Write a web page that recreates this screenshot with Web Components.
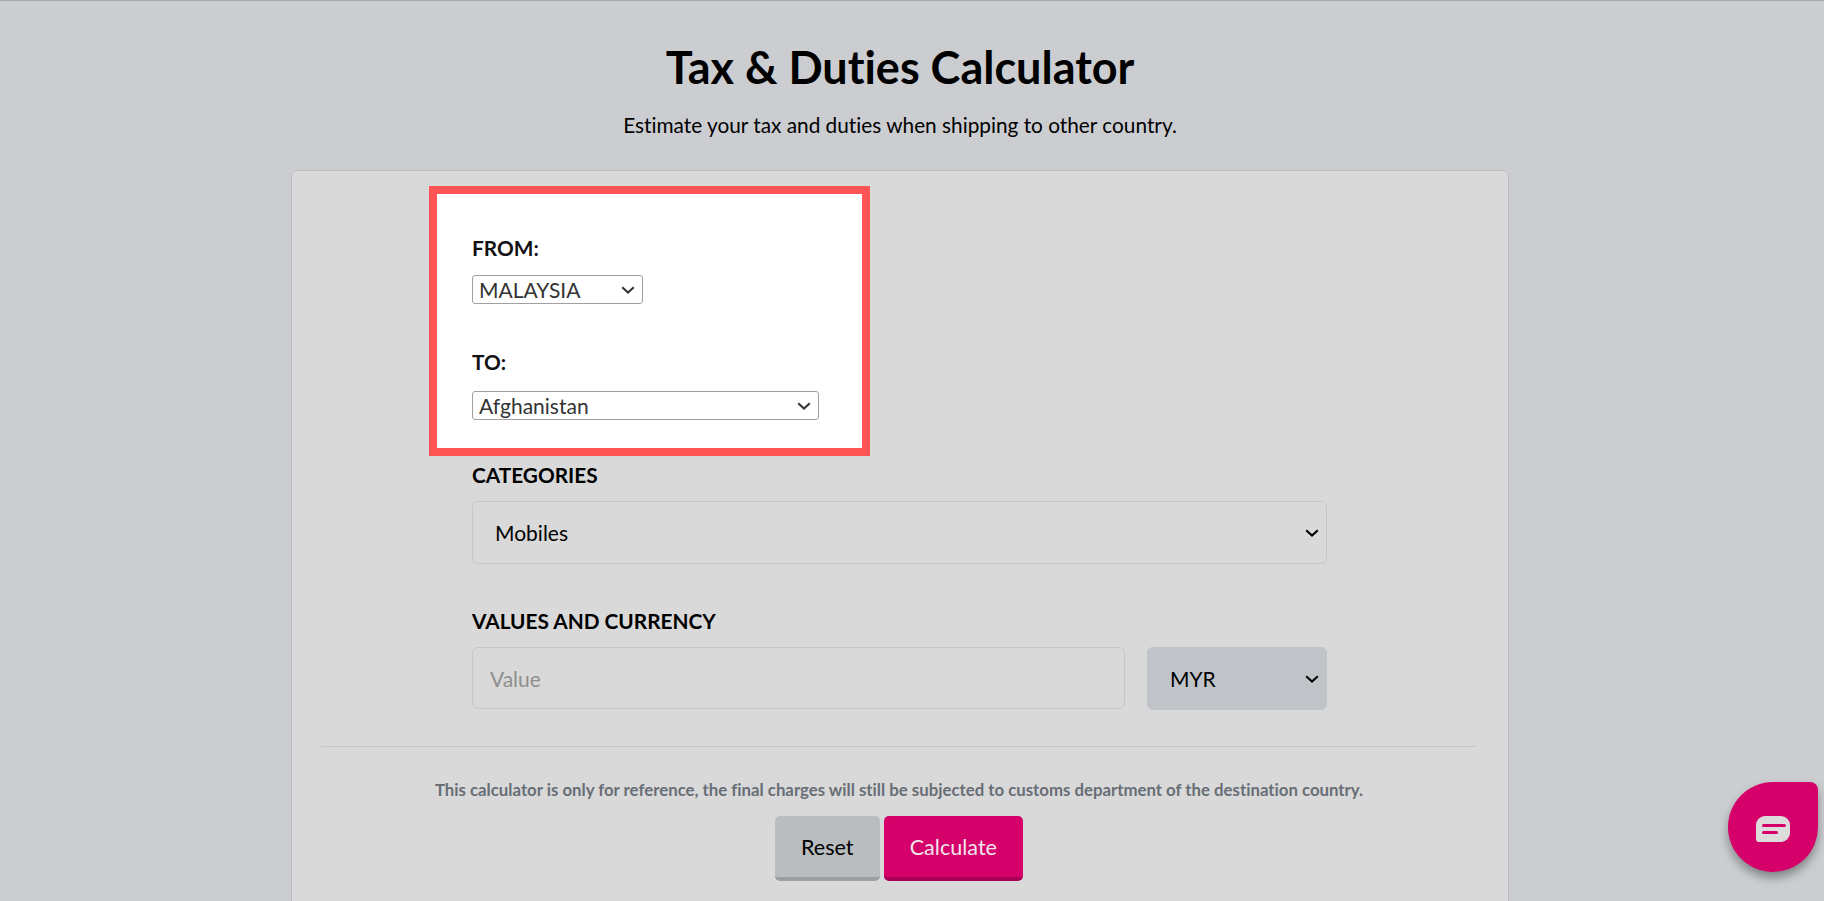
<!DOCTYPE html>
<html lang="en">
<head>
<meta charset="utf-8">
<title>Tax &amp; Duties Calculator</title>
<style>
    html, body { height: 100%; overflow: hidden; }
    body {
        margin: 0;
        background: #cbcdd1;
        border-top: 1px solid #a6a8aa;
        box-sizing: border-box;
        font-family: Lato, "Liberation Sans", sans-serif;
        font-variant-ligatures: none;
        color: #000;
    }
</style>
</head>
<body>
<calc-page>
    <page-header slot="header" heading="Tax &amp; Duties Calculator">
        Estimate your tax and duties when shipping to other country.
    </page-header>
    <calc-card>
        <route-box>
            <small-select label="FROM:" value="MALAYSIA" width="171px" gap="14px"></small-select>
            <small-select label="TO:" value="Afghanistan" width="347px" gap="16px"></small-select>
        </route-box>
        <form-group label="CATEGORIES">
            <big-select value="Mobiles"></big-select>
        </form-group>
        <form-group label="VALUES AND CURRENCY">
            <value-row></value-row>
        </form-group>
        <calc-footer slot="footer">
            This calculator is only for reference, the final charges will still be subjected to customs department of the destination country.
        </calc-footer>
    </calc-card>
</calc-page>
<chat-launcher></chat-launcher>

<script>
// Shared chevron for all the selects, only the colour changes
function chevron(color) {
    const svg = `<svg xmlns="http://www.w3.org/2000/svg" width="14" height="8" viewBox="0 0 14 8"><path d="M1.2 1.2L7 6.6L12.8 1.2" fill="none" stroke="${color}" stroke-width="2"/></svg>`;
    return `url("data:image/svg+xml,${encodeURIComponent(svg)}")`;
}

// Page shell, centres the header and the card
class CalcPage extends HTMLElement {
    connectedCallback() {
        this.attachShadow({ mode: 'open' });
        this.shadowRoot.innerHTML = `
            <style>
                :host { display: block; padding-right: 24px; }
                .wrap {
                    display: flex;
                    flex-direction: column;
                    align-items: center;
                }
            </style>
            <div class="wrap">
                <slot name="header"></slot>
                <slot></slot>
            </div>
        `;
    }
}

class PageHeader extends HTMLElement {
    connectedCallback() {
        this.attachShadow({ mode: 'open' });
        this.shadowRoot.innerHTML = `
            <style>
                :host {
                    display: block;
                    text-align: center;
                    padding-top: 39px;
                    margin-bottom: 30px;
                }
                h1 {
                    margin: 0 0 16px;
                    font-size: 45px;
                    line-height: 54px;
                    font-weight: 700;
                }
                p {
                    margin: 0;
                    font-size: 20.8px;
                    line-height: 30px;
                }
            </style>
            <h1>${this.getAttribute('heading')}</h1>
            <p><slot></slot></p>
        `;
    }
}

class CalcCard extends HTMLElement {
    connectedCallback() {
        this.attachShadow({ mode: 'open' });
        this.shadowRoot.innerHTML = `
            <style>
                :host {
                    display: block;
                    box-sizing: border-box;
                    width: 1218px;
                    height: 900px;
                    background: #d9d9d9;
                    border: 1px solid #bdbfc3;
                    border-radius: 6px;
                    padding: 15px 31px 0 29px;
                }
                .form {
                    display: flex;
                    flex-direction: column;
                    width: 855px;
                    margin: 0 auto 0 151px;
                }
            </style>
            <div class="form"><slot></slot></div>
            <slot name="footer"></slot>
        `;
    }
}

// The red marked part of the form
class RouteBox extends HTMLElement {
    connectedCallback() {
        this.attachShadow({ mode: 'open' });
        this.shadowRoot.innerHTML = `
            <style>
                :host {
                    display: flex;
                    flex-direction: column;
                    gap: 45px;
                    box-sizing: border-box;
                    width: 441px;
                    height: 270px;
                    margin-left: -43px;
                    padding: 41px 35px 0;
                    background: #fff;
                    border: 8px solid #ff5555;
                }
            </style>
            <slot></slot>
        `;
    }
}

class SmallSelect extends HTMLElement {
    connectedCallback() {
        this.attachShadow({ mode: 'open' });
        this.shadowRoot.innerHTML = `
            <style>
                :host { display: block; }
                label {
                    display: block;
                    font-size: 20.8px;
                    line-height: 26px;
                    font-weight: 700;
                    color: #111;
                    margin-bottom: ${this.getAttribute('gap')};
                }
                select {
                    display: block;
                    box-sizing: border-box;
                    appearance: none;
                    width: ${this.getAttribute('width')};
                    height: 29px;
                    padding: 0 6px;
                    background: #fff ${chevron('#333')} no-repeat right 7px center;
                    border: 1px solid #a0a0a0;
                    border-radius: 3px;
                    font-family: Lato, sans-serif;
                    font-variant-ligatures: none;
                    font-size: 21px;
                    color: #333;
                }
            </style>
            <label>${this.getAttribute('label')}</label>
            <select><option>${this.getAttribute('value')}</option></select>
        `;
    }
}

class FormGroup extends HTMLElement {
    connectedCallback() {
        this.attachShadow({ mode: 'open' });
        this.shadowRoot.innerHTML = `
            <style>
                :host { display: block; margin-top: 6px; margin-bottom: 38px; }
                label {
                    display: block;
                    font-size: 20.8px;
                    line-height: 26px;
                    font-weight: 700;
                    margin-bottom: 13px;
                }
            </style>
            <label>${this.getAttribute('label')}</label>
            <slot></slot>
        `;
    }
}

class BigSelect extends HTMLElement {
    connectedCallback() {
        this.attachShadow({ mode: 'open' });
        this.shadowRoot.innerHTML = `
            <style>
                :host { display: block; }
                select {
                    display: block;
                    box-sizing: border-box;
                    appearance: none;
                    width: 100%;
                    height: 63px;
                    padding: 0 22px;
                    background: var(--select-bg, transparent) ${chevron('#000')} no-repeat right 7px center;
                    border: 1px solid var(--select-border, #c4c7ce);
                    border-radius: 6px;
                    font-family: Lato, sans-serif;
                    font-variant-ligatures: none;
                    font-size: 21px;
                    color: #000;
                }
            </style>
            <select><option>${this.getAttribute('value')}</option></select>
        `;
    }
}

class ValueRow extends HTMLElement {
    connectedCallback() {
        this.attachShadow({ mode: 'open' });
        this.shadowRoot.innerHTML = `
            <style>
                :host {
                    display: flex;
                    gap: 22px;
                    align-items: flex-start;
                }
                input {
                    flex: 1;
                    min-width: 0;
                    box-sizing: border-box;
                    height: 62px;
                    padding: 0 17px;
                    background: transparent;
                    border: 1px solid #c4c7ce;
                    border-radius: 6px;
                    font-family: Lato, sans-serif;
                    font-size: 21px;
                }
                input::placeholder { color: #8f8f8f; opacity: 1; }
                big-select {
                    width: 180px;
                    --select-bg: #c0c4c8;
                    --select-border: #c0c4c8;
                }
            </style>
            <input type="text" placeholder="Value">
            <big-select value="MYR"></big-select>
        `;
    }
}

class CalcFooter extends HTMLElement {
    connectedCallback() {
        this.attachShadow({ mode: 'open' });
        this.shadowRoot.innerHTML = `
            <style>
                :host {
                    display: block;
                    border-top: 1px solid #c4c6ca;
                    margin-top: -2px;
                    padding-top: 31px;
                    text-align: center;
                }
                p {
                    margin: 0 0 14px;
                    font-size: 16.8px;
                    line-height: 24px;
                    font-weight: 700;
                    color: #686e76;
                }
                .actions {
                    display: flex;
                    justify-content: center;
                    gap: 4px;
                }
            </style>
            <p><slot></slot></p>
            <div class="actions">
                <calc-button kind="plain">Reset</calc-button>
                <calc-button kind="primary">Calculate</calc-button>
            </div>
        `;
    }
}

class CalcButton extends HTMLElement {
    connectedCallback() {
        const primary = this.getAttribute('kind') === 'primary';
        this.attachShadow({ mode: 'open' });
        this.shadowRoot.innerHTML = `
            <style>
                :host { display: block; }
                button {
                    display: block;
                    box-sizing: border-box;
                    height: 65px;
                    padding: 0 26px;
                    border: 0;
                    border-bottom: 4px solid ${primary ? '#a80058' : '#9c9ea1'};
                    border-radius: 5px;
                    background: ${primary ? '#d50069' : '#babdc0'};
                    color: ${primary ? '#f1e6ec' : '#000'};
                    font-family: Lato, sans-serif;
                    font-variant-ligatures: none;
                    font-size: 21.6px;
                }
            </style>
            <button type="button"><slot></slot></button>
        `;
    }
}

// Floating chat button, bottom right of the window
class ChatLauncher extends HTMLElement {
    connectedCallback() {
        this.attachShadow({ mode: 'open' });
        this.shadowRoot.innerHTML = `
            <style>
                :host {
                    position: fixed;
                    right: 6px;
                    bottom: 29px;
                    display: flex;
                    align-items: center;
                    justify-content: center;
                    width: 90px;
                    height: 90px;
                    background: #d50069;
                    border-radius: 50% 8px 50% 50%;
                    box-shadow: 0 6px 10px rgba(0, 0, 0, .35);
                }
                svg { display: block; margin-top: 4px; }
            </style>
            <svg width="34" height="26" viewBox="0 0 34 26">
                <path d="M9 0H25A9 9 0 0 1 34 9V17A9 9 0 0 1 25 26H3A3 3 0 0 1 0 23V9A9 9 0 0 1 9 0Z" fill="#dcdcdc"/>
                <path d="M7.5 9.5H28.5M7.5 16.5H20.5" stroke="#d50069" stroke-width="3" stroke-linecap="round" fill="none"/>
            </svg>
        `;
    }
}

customElements.define('calc-page', CalcPage);
customElements.define('page-header', PageHeader);
customElements.define('calc-card', CalcCard);
customElements.define('route-box', RouteBox);
customElements.define('small-select', SmallSelect);
customElements.define('form-group', FormGroup);
customElements.define('big-select', BigSelect);
customElements.define('value-row', ValueRow);
customElements.define('calc-footer', CalcFooter);
customElements.define('calc-button', CalcButton);
customElements.define('chat-launcher', ChatLauncher);
</script>
</body>
</html>
